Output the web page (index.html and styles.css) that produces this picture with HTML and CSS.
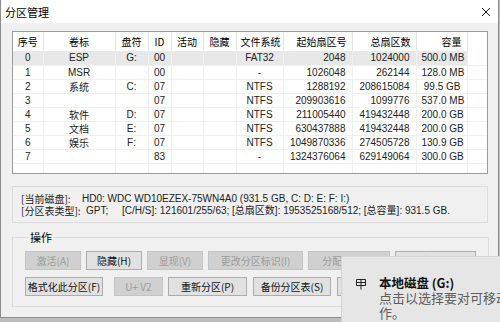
FILE: index.html
```html
<!DOCTYPE html>
<html lang="zh">
<head>
<meta charset="utf-8">
<link rel="stylesheet" href="styles.css">
</head>
<body>
<div class="win">
  <div class="titlebar">
    <span class="title">分区管理</span>
    <svg class="close" width="10" height="10" viewBox="0 0 10 10"><path d="M1 1L9 9M9 1L1 9" stroke="#111" stroke-width="1"/></svg>
  </div>
  <div class="content">
    <div class="list">
      <table>
        <colgroup>
          <col style="width:30px"><col style="width:72px"><col style="width:33px"><col style="width:23px"><col style="width:32px"><col style="width:33px"><col style="width:47px"><col style="width:69px"><col style="width:64px"><col style="width:51px"><col style="width:20px">
        </colgroup>
        <thead>
          <tr><th>序号</th><th>卷标</th><th>盘符</th><th>ID</th><th>活动</th><th>隐藏</th><th>文件系统</th><th class="r">起始扇区号</th><th class="r">总扇区数</th><th class="r">容量</th><th class="fill"></th></tr>
        </thead>
        <tbody>
          <tr class="sel"><td>0</td><td>ESP</td><td>G:</td><td>00</td><td></td><td></td><td>FAT32</td><td class="r">2048</td><td class="r">1024000</td><td class="r">500.0 MB</td><td class="fill"></td></tr>
          <tr><td>1</td><td>MSR</td><td></td><td>00</td><td></td><td></td><td>-</td><td class="r">1026048</td><td class="r">262144</td><td class="r">128.0 MB</td><td class="fill"></td></tr>
          <tr><td>2</td><td class="zh">系统</td><td>C:</td><td>07</td><td></td><td></td><td>NTFS</td><td class="r">1288192</td><td class="r">208615084</td><td class="r">99.5 GB</td><td class="fill"></td></tr>
          <tr><td>3</td><td></td><td></td><td>07</td><td></td><td></td><td>NTFS</td><td class="r">209903616</td><td class="r">1099776</td><td class="r">537.0 MB</td><td class="fill"></td></tr>
          <tr><td>4</td><td class="zh">软件</td><td>D:</td><td>07</td><td></td><td></td><td>NTFS</td><td class="r">211005440</td><td class="r">419432448</td><td class="r">200.0 GB</td><td class="fill"></td></tr>
          <tr><td>5</td><td class="zh">文档</td><td>E:</td><td>07</td><td></td><td></td><td>NTFS</td><td class="r">630437888</td><td class="r">419432448</td><td class="r">200.0 GB</td><td class="fill"></td></tr>
          <tr><td>6</td><td class="zh">娱乐</td><td>F:</td><td>07</td><td></td><td></td><td>NTFS</td><td class="r">1049870336</td><td class="r">274505728</td><td class="r">130.9 GB</td><td class="fill"></td></tr>
          <tr><td>7</td><td></td><td></td><td>83</td><td></td><td></td><td>-</td><td class="r">1324376064</td><td class="r">629149064</td><td class="r">300.0 GB</td><td class="fill"></td></tr>
          <tr class="empty"><td></td><td></td><td></td><td></td><td></td><td></td><td></td><td></td><td></td><td></td><td class="fill"></td></tr>
        </tbody>
      </table>
    </div>
    <div class="info">
      <div class="line"><span class="lab1">[当前磁盘]:</span><span>HD0: WDC WD10EZEX-75WN4A0 (931.5 GB, C: D: E: F: I:)</span></div>
      <div class="line"><span class="lab2">[分区表类型]:</span><span class="gpt">GPT;</span><span>[C/H/S]: 121601/255/63; [总扇区数]: 1953525168/512; [总容量]: 931.5 GB.</span></div>
    </div>
    <fieldset class="ops">
      <legend>操作</legend>
      <div class="btnrow">
        <span class="btn dis w56">激活(A)</span>
        <span class="btn w56">隐藏(H)</span>
        <span class="btn dis w56">显现(V)</span>
        <span class="btn dis w95">更改分区标识(I)</span>
        <span class="btn dis w82">分配盘符(G)</span>
        <span class="btn w81">删除盘符(R)</span>
      </div>
      <div class="btnrow">
        <span class="btn w78">格式化此分区(F)</span>
        <span class="btn dis w49 gap11">U+ V2</span>
        <span class="btn w79">重新分区(P)</span>
        <span class="btn w78 gap6">备份分区表(S)</span>
        <span class="btn w78 gap6">还原分区表</span>
      </div>
    </fieldset>
  </div>
</div>
<div class="toast">
  <svg class="ticon" width="12" height="12" viewBox="0 0 12 12"><path d="M1.5 1.5H10.5V7.5H1.5Z M1.5 4.5H10.5 M6 1.5V11.5" fill="none" stroke="#222" stroke-width="1"/></svg>
  <div class="tbody">
    <div class="ttitle">本地磁盘 (G:)</div>
    <div class="ttext">点击以选择要对可移动媒体执行的操作。</div>
  </div>
</div>
</body>
</html>
```

FILE: styles.css
```css
* { box-sizing: border-box; }
html, body {
  margin: 0;
  padding: 0;
}
body {
  width: 500px;
  height: 322px;
  overflow: hidden;
  position: relative;
  background: #bdbdbd;
  font-family: "Liberation Sans Narrow", "Liberation Sans", "Noto Sans CJK SC", sans-serif;
  font-size: 10px;
  color: #000;
}
.win {
  width: 499px;
  height: 318px;
  background: #f0f0f0;
  border: 1px solid #8c8c8c;
  border-top: none;
  display: flex;
  flex-direction: column;
}
.titlebar {
  height: 23px;
  background: #ffffff;
  display: flex;
  align-items: center;
  justify-content: space-between;
  padding: 0 7px 0 4px;
}
.title {
  font-family: "Noto Sans CJK SC", sans-serif;
  font-size: 11px;
  color: #000;
}
.content {
  padding: 8px 10px 0 11px;
  display: flex;
  flex-direction: column;
}
.list {
  width: 476px;
  height: 143px;
  border: 1px solid #9a9a9a;
  background: #fff;
  overflow: hidden;
}
table {
  border-collapse: collapse;
  table-layout: fixed;
  width: 474px;
}
th {
  height: 19px;
  font-weight: normal;
  font-family: "Noto Sans CJK SC", sans-serif;
  font-size: 10px;
  text-align: center;
  padding: 0 4px;
  border-right: 1px solid #e5e5e5;
  white-space: nowrap;
  overflow: hidden;
}
td {
  height: 14px;
  line-height: 13px;
  padding: 0 5px;
  text-align: center;
  border-right: 1px solid #f0f0f0;
  border-bottom: 1px solid #f0f0f0;
  white-space: nowrap;
  overflow: hidden;
  color: #222;
}
.r { text-align: right; padding-right: 6px; }
th.r { padding-right: 5px; }
.zh { font-family: "Noto Sans CJK SC", sans-serif; }
.fill { border-right: none; }
tr.sel td { background: #e8e8e8; }
tr.sel td.fill { background: #fff; }
tr.empty td { height: 11px; border-bottom: none; }
.info {
  margin-top: 12px;
  width: 476px;
  height: 37px;
  border: 1px solid #dcdcdc;
  padding: 6px 0 0 8px;
  display: flex;
  flex-direction: column;
  color: #222;
}
.line {
  display: flex;
  line-height: 12px;
  white-space: nowrap;
}
.lab1, .lab2 { font-family: "Noto Sans CJK SC", sans-serif; }
.lab1 { width: 61px; }
.lab2 { width: 65px; }
.gpt { width: 36px; }
.ops {
  margin: 8px 0 0 0;
  width: 476px;
  border: 1px solid #dcdcdc;
  padding: 8px 12px 10px 12px;
  display: flex;
  flex-direction: column;
  gap: 7px;
}
.ops legend {
  font-family: "Noto Sans CJK SC", sans-serif;
  font-size: 11px;
  line-height: 12px;
  padding: 0 2px;
  margin-left: 3px;
}
.btnrow {
  display: flex;
  gap: 5px;
}
.btn {
  height: 19px;
  display: flex;
  align-items: center;
  justify-content: center;
  background: #e1e1e1;
  border: 1px solid #adadad;
  font-family: "Noto Sans CJK SC", sans-serif;
  font-size: 10px;
  color: #111;
  white-space: nowrap;
}
.btn.dis {
  background: #d0d0d0;
  border-color: #c4c4c4;
  color: #9c9c9c;
}
.w49 { width: 49px; }
.w56 { width: 56px; }
.w78 { width: 78px; }
.w79 { width: 79px; }
.w81 { width: 81px; }
.w82 { width: 82px; }
.w95 { width: 95px; }
.gap11 { margin-left: 6px; }
.gap6 { margin-left: 1px; }
.toast {
  position: absolute;
  left: 341px;
  top: 256px;
  width: 364px;
  height: 100px;
  background: #e6e6e6;
  border: 1px solid #d4d4d4;
  padding: 19px 0 0 13px;
  display: flex;
  gap: 12px;
  font-family: "Noto Sans CJK SC", sans-serif;
}
.ticon { margin-top: 2px; flex: none; }
.tbody { width: 212px; }
.ttitle {
  font-size: 12.5px;
  font-weight: bold;
  line-height: 14px;
  color: #111;
}
.ttext {
  font-size: 13px;
  line-height: 15px;
  color: #5c5c5c;
}
```
